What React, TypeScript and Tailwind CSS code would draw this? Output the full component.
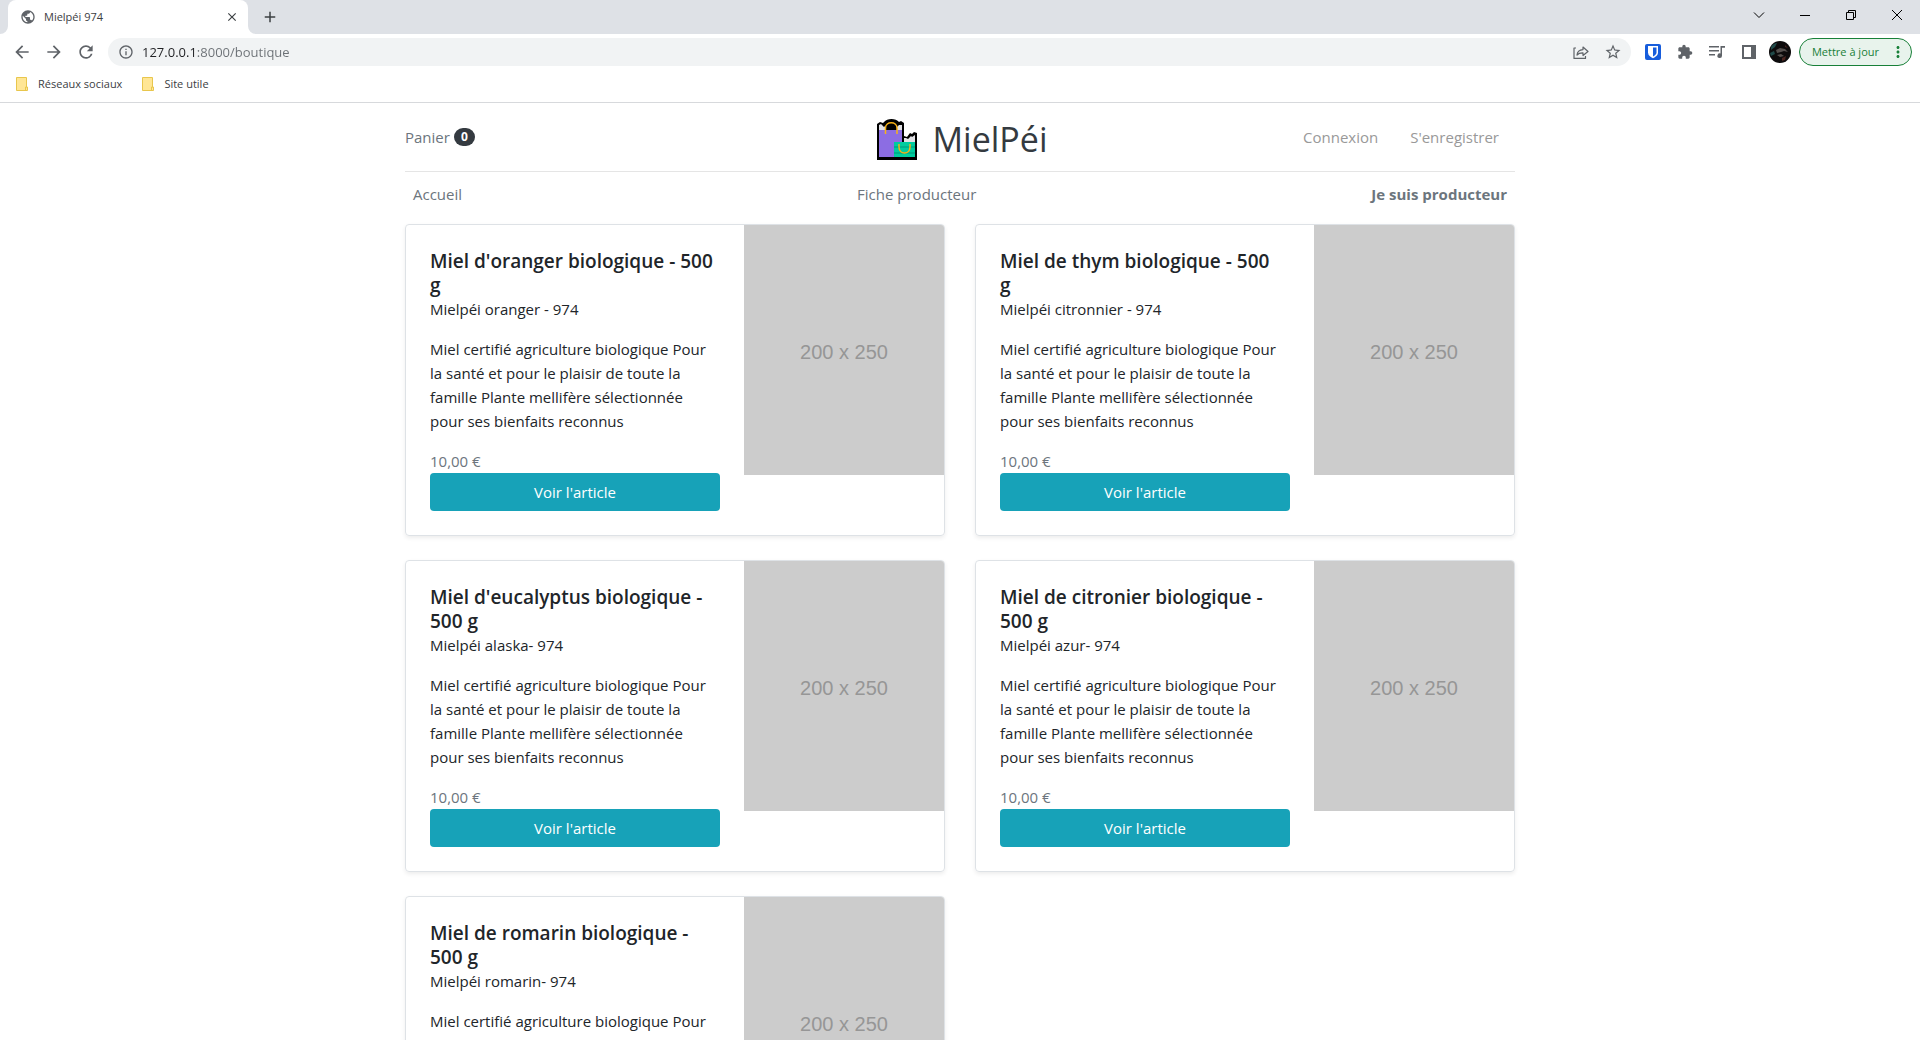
import type { ReactNode } from "react";
import {
  MdArrowBack,
  MdArrowForward,
  MdRefresh,
  MdExtension,
  MdStarBorder,
  MdPublic,
  MdClose,
  MdAdd,
  MdInfoOutline,
  MdMoreVert,
} from "react-icons/md";

type Product = { title: string; subtitle: string };

const products: Product[] = [
  { title: "Miel d'oranger biologique - 500\ng", subtitle: "Mielpéi oranger - 974" },
  { title: "Miel de thym biologique - 500\ng", subtitle: "Mielpéi citronnier - 974" },
  { title: "Miel d'eucalyptus biologique -\n500 g", subtitle: "Mielpéi alaska- 974" },
  { title: "Miel de citronier biologique -\n500 g", subtitle: "Mielpéi azur- 974" },
  { title: "Miel de romarin biologique -\n500 g", subtitle: "Mielpéi romarin- 974" },
];

const description =
  "Miel certifié agriculture biologique Pour la santé et pour le plaisir de toute la famille Plante mellifère sélectionnée pour ses bienfaits reconnus";

function IconButton({ label, className, children }: { label: string; className?: string; children: ReactNode }) {
  return (
    <button type="button" aria-label={label} className={"flex shrink-0 items-center justify-center " + (className ?? "")}>
      {children}
    </button>
  );
}

function TabStrip() {
  return (
    <div className="flex h-[34px] shrink-0 items-end bg-[#dee1e6]">
      <svg viewBox="0 0 8 8" className="size-2 shrink-0 text-white" aria-hidden="true">
        <path d="M8 0v8H0a8 8 0 0 0 8-8z" fill="currentColor" />
      </svg>
      <div className="flex h-full w-60 items-center rounded-t-lg bg-white px-3">
        <MdPublic className="size-4 shrink-0 text-[#5f6368]" />
        <span className="ml-2 grow text-[11px] text-[#3c4043]">Mielpéi 974</span>
        <IconButton label="Fermer l'onglet" className="-mr-1 size-4 text-[#3c4043]">
          <MdClose className="size-3.5" />
        </IconButton>
      </div>
      <svg viewBox="0 0 8 8" className="size-2 shrink-0 text-white" aria-hidden="true">
        <path d="M0 0v8h8a8 8 0 0 1-8-8z" fill="currentColor" />
      </svg>
      <IconButton label="Nouvel onglet" className="ml-1 h-full w-5 text-[#3c4043]">
        <MdAdd className="size-[18px]" />
      </IconButton>
      <div className="ml-auto flex h-full pb-1 text-black">
        <IconButton label="Rechercher dans les onglets" className="w-[46px]">
          <svg viewBox="0 0 12 12" className="size-3" fill="none" stroke="currentColor">
            <path d="M1 3.5l5 5 5-5" />
          </svg>
        </IconButton>
        <IconButton label="Réduire" className="w-[46px]">
          <svg viewBox="0 0 10 10" className="size-2.5" stroke="currentColor">
            <path d="M0 5.5h10" />
          </svg>
        </IconButton>
        <IconButton label="Restaurer" className="w-[46px]">
          <svg viewBox="0 0 10 10" className="size-2.5" fill="none" stroke="currentColor">
            <path d="M.5 2.5h7v7h-7zM2.5 2.5v-2h7v7h-2" />
          </svg>
        </IconButton>
        <IconButton label="Fermer" className="w-[46px]">
          <svg viewBox="0 0 10 10" className="size-2.5" stroke="currentColor">
            <path d="M0 0l10 10M10 0L0 10" />
          </svg>
        </IconButton>
      </div>
    </div>
  );
}

function Toolbar() {
  return (
    <div className="flex h-9 shrink-0 items-center pr-2 pl-3 text-[#5f6368]">
      <div className="flex gap-3">
        <IconButton label="Précédent" className="size-5"><MdArrowBack className="size-5" /></IconButton>
        <IconButton label="Suivant" className="size-5"><MdArrowForward className="size-5" /></IconButton>
        <IconButton label="Actualiser" className="size-5"><MdRefresh className="size-5" /></IconButton>
      </div>
      <div className="ml-3 flex h-7 grow items-center rounded-full bg-[#f1f3f4] px-2.5">
        <MdInfoOutline className="size-4 shrink-0" />
        <input
          aria-label="Adresse"
          defaultValue="127.0.0.1:8000/boutique"
          className="ml-2 h-6 min-w-0 grow bg-[linear-gradient(to_right,#202124_53px,#6b7075_53px)] bg-clip-text text-[13px] text-transparent outline-none"
        />
        <div className="flex gap-4">
          <IconButton label="Partager" className="size-4">
            <svg viewBox="0 0 16 16" className="size-4" fill="none" stroke="currentColor" strokeWidth="1.2" strokeLinejoin="round">
              <path d="M3 4H1v10.400h11.500V12M4 11c.3-3.300 2.400-5.200 6-5.400V3l5 4.500-5 4V8.900c-2.700-.1-4.600.5-6 2.100z" />
            </svg>
          </IconButton>
          <IconButton label="Favori" className="size-4"><MdStarBorder className="size-[18px] shrink-0" /></IconButton>
        </div>
      </div>
      <div className="mr-2 ml-3.5 flex items-center gap-4">
        <IconButton label="Bitwarden" className="size-4">
          <svg viewBox="0 0 16 16" className="size-4">
            <rect width="16" height="16" rx="2" fill="#175ddc" />
            <path d="M3 2h10v6.500c0 2.800-2.600 4.500-5 5.700-2.400-1.200-5-2.900-5-5.700z" fill="#fff" />
            <path d="M8 3.500h3.500v5c0 1.700-1.600 2.900-3.500 4z" fill="#175ddc" />
          </svg>
        </IconButton>
        <IconButton label="Extensions" className="size-4"><MdExtension className="size-4" /></IconButton>
        <IconButton label="Contrôle multimédia" className="size-4">
          <svg viewBox="0 0 16 16" className="size-4" fill="currentColor">
            <path d="M0 2h10v1.500H0zM0 6h10v1.500H0zM0 10h6v1.500H0zM11.500 2H16v1.700h-3v8a2.300 2.300 0 1 1-1.500-2.100z" />
          </svg>
        </IconButton>
        <IconButton label="Panneau latéral" className="size-4">
          <svg viewBox="0 0 16 16" className="size-4" fill="currentColor">
            <path fillRule="evenodd" d="M1 1h14v14H1zM3 3v10h7V3z" />
          </svg>
        </IconButton>
        <IconButton label="Profil" className="-ml-1 size-[22px]">
          <svg viewBox="0 0 22 22" className="size-[22px]">
            <circle cx="11" cy="11" r="11" fill="#0d0b0c" />
            <path d="M2 6c2-3 4-4 6-4L6 6l-4 3zM1 12l4-2 1 3-4 2z" fill="#1f4a49" />
            <path d="M7 9l4-2 5 1 3 3-4-1-3 1-4 1zM8 14l4-1 3 2-4 1z" fill="#55504e" />
            <path d="M13 17l4-2-1 4-3 1zM16 4l3 3-3-1z" fill="#4b2520" />
          </svg>
        </IconButton>
      </div>
      <button type="button" className="flex h-7 shrink-0 items-center rounded-full border border-[#188038] bg-[#e8f3ec] pr-1 pl-3 text-[11px] text-[#188038]">
        Mettre à jour
        <MdMoreVert className="ml-2.5 size-[18px]" />
      </button>
    </div>
  );
}

function Bookmark({ label }: { label: string }) {
  return (
    <a href="#" className="flex items-center text-[11px] text-[#3c4043]">
      <svg viewBox="0 0 12 14" className="mr-2.5 h-3.5 w-3" aria-hidden="true">
        <path d="M.5.500h10V10h1v3.500H.5z" fill="#ffe695" stroke="#e8c64d" />
        <path d="M9.500 13.500V10h1.500" fill="none" stroke="#e8c64d" />
      </svg>
      {label}
    </a>
  );
}

function ShopLogo() {
  return (
    <svg viewBox="0 0 40 41" className="h-[41px] w-10 shrink-0" aria-hidden="true">
      <path d="M0 41V5l3-2 3 1 1-1c3-4 12-4 15 0l2-1 3 2v13l3 1 3-4 2 1 2-2 3 1v27z" fill="#000" />
      <path d="M2 12V6l2-1 3 3 1-1v5zM20 12V8l2-2 3 0v6zM27 23v-4l2 0 2 1 3-3 1 1 3-2v7z" fill="#e1e1e5" />
      <path d="M2 11h23v12h-7v15H2z" fill="#8c6de3" />
      <path d="M17 23h21v15H17z" fill="#00cc9f" />
      <path d="M17 27h21v2H17zM17 33h21v2H17z" fill="#00b28c" />
      <path d="M8.500 15V9c0-7 11.500-7 11.500 0v6M22 25v3c0 8 11 8 11 0v-3" fill="none" stroke="#f8b216" strokeWidth="1.500" />
    </svg>
  );
}

function ProductCard({ title, subtitle }: Product) {
  return (
    <article className="flex items-start overflow-hidden rounded border border-[#dee2e6] shadow-[0_2px_4px_rgba(0,0,0,0.075)]">
      <div className="flex min-w-0 flex-1 flex-col p-6">
        <h2 className="text-[19px] leading-6 font-semibold whitespace-pre-line">{title}</h2>
        <p>{subtitle}</p>
        <p className="my-4">{description}</p>
        <p className="text-[#6c757d]">10,00 €</p>
        <a href="#" className="flex h-[38px] items-center justify-center rounded bg-[#17a2b8] text-white">
          Voir l'article
        </a>
      </div>
      <div role="img" aria-label="200 x 250" className="flex h-[250px] w-[200px] shrink-0 items-center justify-center bg-[#ccc] pt-1 font-['Liberation_Sans',sans-serif] text-xl text-[#969696]">
        200 x 250
      </div>
    </article>
  );
}

export default function App() {
  return (
    <div className="flex h-screen flex-col overflow-hidden bg-white font-['Open_Sans',sans-serif]">
      <TabStrip />
      <Toolbar />
      <div className="flex h-8 shrink-0 items-center gap-5 pb-1 pl-4">
        <Bookmark label="Réseaux sociaux" />
        <Bookmark label="Site utile" />
      </div>
      <div className="min-h-0 grow overflow-y-auto border-t border-[#d7d9dc] [scrollbar-width:none]">
        <div className="mx-auto max-w-[1140px] px-[15px] text-[15px] leading-6 text-[#212529]">
          <header className="grid h-[69px] grid-cols-3 items-center border-b border-[#e5e5e5]">
            <a href="#" className="flex items-center gap-1 text-[#6c757d]">
              Panier
              <span className="rounded-full bg-[#343a40] px-[7px] text-xs leading-[18px] font-bold text-white">0</span>
            </a>
            <a href="#" className="flex items-center justify-center gap-4 pt-1 pl-1 text-[34px] leading-9 text-[#343a40]">
              <ShopLogo />
              MielPéi
            </a>
            <nav className="flex justify-end gap-8 pr-4 text-[#999]">
              <a href="#">Connexion</a>
              <a href="#">S'enregistrer</a>
            </nav>
          </header>
          <nav className="mb-2 flex h-11 items-center justify-between px-2 text-[#6c757d]">
            <a href="#">Accueil</a>
            <a href="#">Fiche producteur</a>
            <a href="#" className="font-bold">Je suis producteur</a>
          </nav>
          <main className="grid grid-cols-2 gap-x-[30px] gap-y-6 pb-6">
            {products.map((p) => (
              <ProductCard key={p.title} {...p} />
            ))}
          </main>
        </div>
      </div>
    </div>
  );
}
